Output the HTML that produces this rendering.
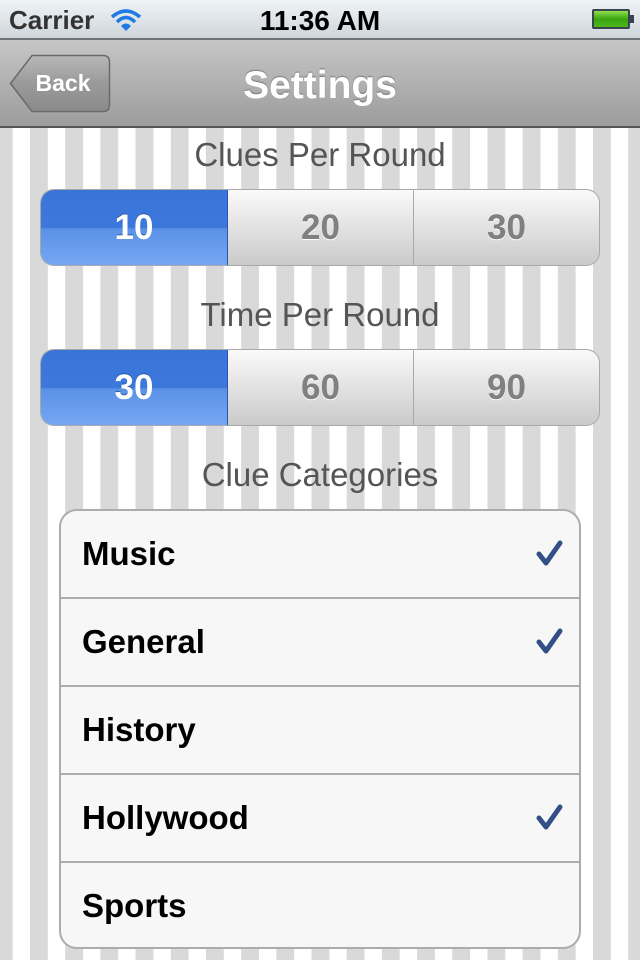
<!DOCTYPE html>
<html><head><meta charset="utf-8"><style>
*{margin:0;padding:0;box-sizing:border-box}
body{width:640px;height:960px;overflow:hidden;font-family:"Liberation Sans",sans-serif;position:relative;
background-color:#fff;background-image:linear-gradient(90deg,#d9d9d9 0,#d9d9d9 18px,#fff 18px,#fff 100%);background-size:35.2px 100%;background-position:30px 0;background-repeat:repeat-x;}
.status{position:absolute;left:0;top:0;width:640px;height:40px;background:linear-gradient(#eef3f6,#cfd6db);border-bottom:2px solid #6c7278}
.status .c{position:absolute;left:9px;top:5px;font-size:26px;font-weight:bold;color:#333}
.status .t{position:absolute;left:0;width:640px;text-align:center;top:5px;font-size:28px;font-weight:bold;color:#000}
.nav{position:absolute;left:0;top:40px;width:640px;height:88px;background:linear-gradient(#c6c6c6,#9c9c9c);border-bottom:2px solid #555}
.nav h1{position:absolute;left:0;width:640px;text-align:center;top:24px;font-size:39px;color:#fff;text-shadow:0 -1px 1px #777}
.label{position:absolute;left:0;width:640px;text-align:center;font-size:33px;color:#555}
.seg{position:absolute;left:40px;width:560px;height:77px;border:1px solid #a8a8a8;border-radius:14px;overflow:hidden;display:flex;background:linear-gradient(#fafafa,#cacaca)}
.seg div{flex:1;text-align:center;line-height:75px;font-size:35px;font-weight:bold;color:#808080;text-shadow:0 1px 0 #fff;border-left:1px solid #a8a8a8}
.seg div.on{border-left:none;color:#fff;text-shadow:0 -1px 0 #2a57a8;background:linear-gradient(#3a74d8 0,#3c78dc 50%,#5b92e6 52%,#75a6f4 100%);flex:0 0 187px;border-right:1px solid #2a55a8}
.tbl{position:absolute;left:59px;top:509px;width:522px;height:440px;background:#f7f7f7;border:2px solid #acacac;border-radius:18px;overflow:hidden}
.row{height:88px;border-bottom:2px solid #acacac;position:relative;font-size:33px;font-weight:bold;padding-left:21px;line-height:86px;color:#000}
.row:last-child{border-bottom:none}
.row svg{position:absolute;right:16px;top:28px}
</style></head><body>
<div class="status"><span class="c">Carrier</span>
<svg style="position:absolute;left:110px;top:8px" width="32" height="24" viewBox="0 0 32 24"><path d="M2 9 Q16 -3 30 9" stroke="#1e7be6" stroke-width="3.5" fill="none"/><path d="M7 14 Q16 5 25 14" stroke="#1e7be6" stroke-width="3.5" fill="none"/><path d="M11 18 L16 23 L21 18 Q16 13 11 18Z" fill="#1e7be6"/></svg>
<span class="t">11:36 AM</span>
<div style="position:absolute;left:592px;top:9px;width:38px;height:20px;border:2px solid #3a4450;border-radius:2px;background:linear-gradient(#8fe04a,#3ba412 50%,#4cb818)"></div>
<div style="position:absolute;left:630px;top:15px;width:4px;height:8px;background:#3a4450"></div>
</div>
<div class="nav">
<svg style="position:absolute;left:9px;top:14px" width="102" height="59" viewBox="0 0 102 59"><defs><linearGradient id="g" x1="0" y1="0" x2="0" y2="1"><stop offset="0" stop-color="#b8b8b8"/><stop offset="0.5" stop-color="#9a9a9a"/><stop offset="1" stop-color="#8a8a8a"/></linearGradient></defs><path d="M1.5 29.5 L23 1.5 H94 Q100.5 1.5 100.5 8 V51 Q100.5 57.5 94 57.5 H23 Z" fill="url(#g)" stroke="#6a6a6a" stroke-width="1.5"/><text x="54" y="37" text-anchor="middle" font-family="Liberation Sans" font-weight="bold" font-size="23" fill="#fff">Back</text></svg>
<h1>Settings</h1></div>
<div class="label" style="top:136px">Clues Per Round</div>
<div class="seg" style="top:189px"><div class="on">10</div><div style="border-left:none">20</div><div>30</div></div>
<div class="label" style="top:296px">Time Per Round</div>
<div class="seg" style="top:349px"><div class="on">30</div><div style="border-left:none">60</div><div>90</div></div>
<div class="label" style="top:456px">Clue Categories</div>
<div class="tbl">
<div class="row">Music<svg width="28" height="28" viewBox="0 0 28 28"><path d="M4 15 L11 24 L25 4" stroke="#344f86" stroke-width="5" fill="none" stroke-linecap="round" stroke-linejoin="round"/></svg></div>
<div class="row">General<svg width="28" height="28" viewBox="0 0 28 28"><path d="M4 15 L11 24 L25 4" stroke="#344f86" stroke-width="5" fill="none" stroke-linecap="round" stroke-linejoin="round"/></svg></div>
<div class="row">History</div>
<div class="row">Hollywood<svg width="28" height="28" viewBox="0 0 28 28"><path d="M4 15 L11 24 L25 4" stroke="#344f86" stroke-width="5" fill="none" stroke-linecap="round" stroke-linejoin="round"/></svg></div>
<div class="row">Sports</div>
</div>
</body></html>
